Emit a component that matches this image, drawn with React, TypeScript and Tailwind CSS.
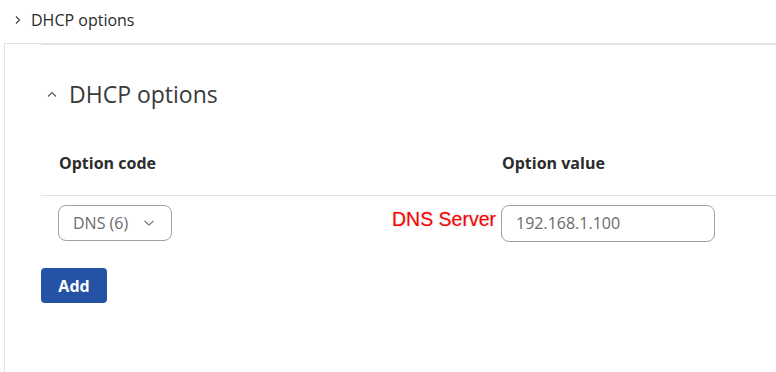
import React from "react";

const ChevronRight = () => (
	<svg width="8" height="10" viewBox="0 0 8 10" className="mr-[9px]">
		<path d="M2 1.5 L5.5 5 L2 8.5" fill="none" stroke="#444" strokeWidth="1.2" />
	</svg>
);

const ChevronUp = () => (
	<svg width="10" height="8" viewBox="0 0 10 8" className="mr-[12px]">
		<path d="M1 5.5 L5 1.5 L9 5.5" fill="none" stroke="#555" strokeWidth="1.1" />
	</svg>
);

const ChevronDown = () => (
	<svg width="12" height="8" viewBox="0 0 12 8">
		<path d="M1.5 2 L6 6 L10.5 2" fill="none" stroke="#777" strokeWidth="1.1" />
	</svg>
);

export default function App() {
	return (
		<div className="w-[776px] h-[372px] bg-white overflow-hidden font-['Open_Sans',sans-serif] text-[#333]">
			<div className="h-[43px] flex items-center pl-[14px] pb-[3px]">
				<ChevronRight />
				<span className="text-[16px] text-[#2b2b2b]">DHCP options</span>
			</div>

			<div className="ml-[4px] border-l border-t border-[#e2e2e2] h-[329px]">
				<div className="ml-[36px] h-px bg-[#e2e2e2]" />
				<div className="pl-[36px]">
					<div className="flex items-center pl-[6px] pt-[18px] h-[81px]">
						<ChevronUp />
						<h2 className="text-[23px] text-[#3a3a3a] leading-none">DHCP options</h2>
					</div>

					<div className="flex items-center h-[69px] pt-[5px] text-[16px] font-bold text-[#2b2b2b]">
						<div className="w-[461px] pl-[18px]">Option code</div>
						<div>Option value</div>
					</div>
					<div className="h-px bg-[#e0e0e6]" />

					<div className="flex items-center h-[54px]">
						<div className="w-[460px] pl-[17px] pr-[5px] flex items-center justify-between">
							<div className="w-[114px] h-[36px] border border-[#a0a0a0] rounded-[8px] flex items-center pl-[14px] pr-[16px] justify-between text-[16px] text-[#6b6b6b]">
								<span>DNS (6)</span>
								<ChevronDown />
							</div>
							<span className="font-['Liberation_Sans',Arial,sans-serif] text-[19.5px] text-[#ff0000] -mt-[6px] [text-shadow:0_0_2px_rgba(0,0,0,0.25)]">DNS Server</span>
						</div>
						<div className="w-[214px] h-[37px] border border-[#a0a0a0] rounded-[8px] flex items-center pl-[14px] text-[16px] text-[#6b6b6b]">
							192.168.1.100
						</div>
					</div>

					<div className="pt-[18px]">
						<button className="w-[66px] h-[35px] bg-[#2453a6] rounded-[4px] text-white font-bold text-[16px]">
							Add
						</button>
					</div>
				</div>
			</div>
		</div>
	);
}
